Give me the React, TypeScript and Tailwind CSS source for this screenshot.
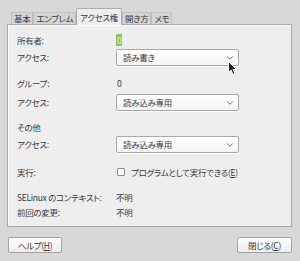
import { ChevronDown } from 'lucide-react';

const font = { fontFamily: '"Noto Sans CJK JP", "Noto Sans", sans-serif' };

function Select({ value }: { value: string }) {
  return (
    <div className="flex h-[17px] w-[123px] items-center justify-between rounded-[2px] border border-[#a9a9a9] bg-gradient-to-b from-white to-[#f4f4f4] pl-[6px] pr-[3px] shadow-[0_1px_0_#ffffff]">
      <span>{value}</span>
      <ChevronDown size={10} strokeWidth={2} className="text-[#555]" />
    </div>
  );
}

function Row({ label, children, className = '' }: { label: string; children?: React.ReactNode; className?: string }) {
  return (
    <div className={`flex items-center ${className}`}>
      <span className="w-[99px] shrink-0 whitespace-nowrap">{label}</span>
      {children}
    </div>
  );
}

const tabs = ['基本', 'エンブレム', 'アクセス権', '開き方', 'メモ'];

export default function App() {
  return (
    <div
      className="relative h-[261px] w-[300px] overflow-hidden bg-[#d8d8d8] text-[8.5px] leading-none tracking-[-0.3px] text-[#3a3a3a] [font-feature-settings:'palt']"
      style={font}
    >
      {/* tabs */}
      <div className="flex h-[24px] items-end pl-[11px]">
        {tabs.map((t, i) =>
          i === 2 ? (
            <div key={t} className="relative z-10 -mb-px flex h-[17px] items-center rounded-t-[2px] border border-b-0 border-[#acacac] bg-[#eeeeee] px-[3px]">
              {t}
            </div>
          ) : (
            <div key={t} className="flex h-[12px] items-center border border-b-0 border-l-[#bdbdbd] border-r-[#bdbdbd] border-t-[#c4c4c4] bg-[#d4d4d4] px-[2px]">
              {t}
            </div>
          )
        )}
      </div>

      {/* panel */}
      <div className="ml-[7px] h-[203px] w-[285px] border border-[#aaaaaa] bg-[#eeeeee] pl-[9px] pt-[8px] shadow-[inset_1px_1px_0_#fafafa]">
        <Row label="所有者:" className="h-[14px]">
          <span className="bg-[#8ec35a] px-[1px] py-[2px] text-[#e8f5d8]">0</span>
        </Row>
        <Row label="アクセス:" className="mt-[2px] h-[17px]">
          <Select value="読み書き" />
        </Row>
        <Row label="グループ:" className="mt-[10px] h-[14px]">
          <span className="pl-[1px]">0</span>
        </Row>
        <Row label="アクセス:" className="mt-[4px] h-[17px]">
          <Select value="読み込み専用" />
        </Row>
        <Row label="その他" className="mt-[9px] h-[14px]" />
        <Row label="アクセス:" className="mt-[2px] h-[17px]">
          <Select value="読み込み専用" />
        </Row>
        <Row label="実行:" className="mt-[12px] h-[14px]">
          <span className="ml-[1px] mr-[6px] h-[8px] w-[8px] rounded-[1px] border border-[#8a8a8a] bg-white" />
          <span>
            プログラムとして実行できる(<span className="underline">E</span>)
          </span>
        </Row>
        <Row label="SELinux のコンテキスト:" className="mt-[11px] h-[14px]">
          <span>不明</span>
        </Row>
        <Row label="前回の変更:" className="mt-[1px] h-[14px]">
          <span>不明</span>
        </Row>
      </div>

      {/* buttons */}
      <div className="mx-[8px] mt-[10px] flex justify-between">
        <button className="flex h-[16px] w-[54px] items-center justify-center rounded-[2px] border border-[#a4a4a4] bg-gradient-to-b from-white to-[#ececec] text-[#3a3a3a]">
          ヘルプ(<span className="underline">H</span>)
        </button>
        <button className="flex h-[16px] w-[55px] items-center justify-center rounded-[2px] border border-[#a4a4a4] bg-gradient-to-b from-white to-[#ececec] text-[#3a3a3a]">
          閉じる(<span className="underline">C</span>)
        </button>
      </div>

      {/* mouse pointer */}
      <svg className="absolute left-[228px] top-[61px]" width="10" height="15" viewBox="0 0 10 15">
        <path d="M0.5 0.5 L0.5 11.5 L3 9 L5 13.5 L7 12.5 L5 8.5 L8.5 8.5 Z" fill="#222" stroke="#fff" strokeWidth="1" strokeLinejoin="round" />
      </svg>
    </div>
  );
}
